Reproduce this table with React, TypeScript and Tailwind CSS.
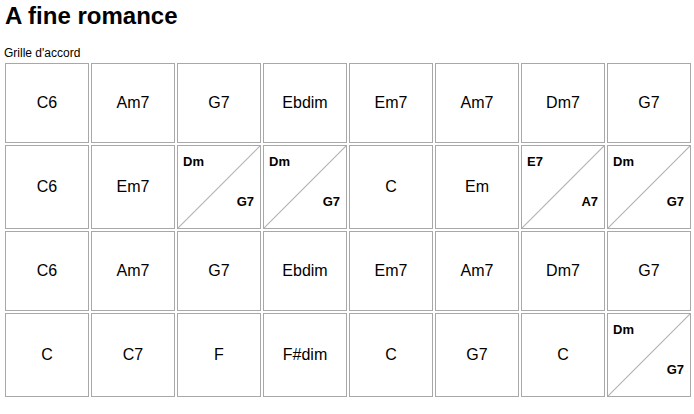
import React from "react";

type Cell = string | [string, string];

const rows: { h: string; cells: Cell[] }[] = [
  { h: "h-[80px]", cells: ["C6", "Am7", "G7", "Ebdim", "Em7", "Am7", "Dm7", "G7"] },
  { h: "h-[84px]", cells: ["C6", "Em7", ["Dm", "G7"], ["Dm", "G7"], "C", "Em", ["E7", "A7"], ["Dm", "G7"]] },
  { h: "h-[80px]", cells: ["C6", "Am7", "G7", "Ebdim", "Em7", "Am7", "Dm7", "G7"] },
  { h: "h-[84px]", cells: ["C", "C7", "F", "F#dim", "C", "G7", "C", ["Dm", "G7"]] },
];

function ChordCell({ cell, h }: { cell: Cell; h: string }) {
  if (typeof cell === "string") {
    return (
      <div className={`${h} border border-[#a8a8a8] bg-white flex items-center justify-center text-[16px] text-black`}>
        {cell}
      </div>
    );
  }
  return (
    <div className={`${h} relative border border-[#a8a8a8] bg-white`}>
      <svg className="absolute inset-0 w-full h-full" preserveAspectRatio="none" viewBox="0 0 100 100">
        <line x1="0" y1="100" x2="100" y2="0" stroke="#b4b4b4" strokeWidth="1.2" vectorEffect="non-scaling-stroke" />
      </svg>
      <span className="absolute top-[8px] left-[5px] text-[13px] leading-[15px] font-bold text-black">{cell[0]}</span>
      <span className="absolute top-[48px] right-[6px] text-[13px] leading-[15px] font-bold text-black">{cell[1]}</span>
    </div>
  );
}

export default function App() {
  return (
    <div className="w-[694px] h-[414px] bg-white overflow-hidden" style={{ fontFamily: '"Liberation Sans", Arial, sans-serif' }}>
      <h1 className="pt-[2px] pl-[5px] text-[24px] leading-[28px] font-bold text-black">A fine romance</h1>
      <div className="mt-[16px] pl-[4px] text-[12px] leading-[14px] text-black">Grille d'accord</div>
      <div className="mt-[3px] ml-[5px] w-[686px] flex flex-col gap-[2px]">
        {rows.map((r, i) => (
          <div key={i} className="grid grid-cols-8 gap-[2px]">
            {r.cells.map((c, j) => (
              <ChordCell key={j} cell={c} h={r.h} />
            ))}
          </div>
        ))}
      </div>
    </div>
  );
}
